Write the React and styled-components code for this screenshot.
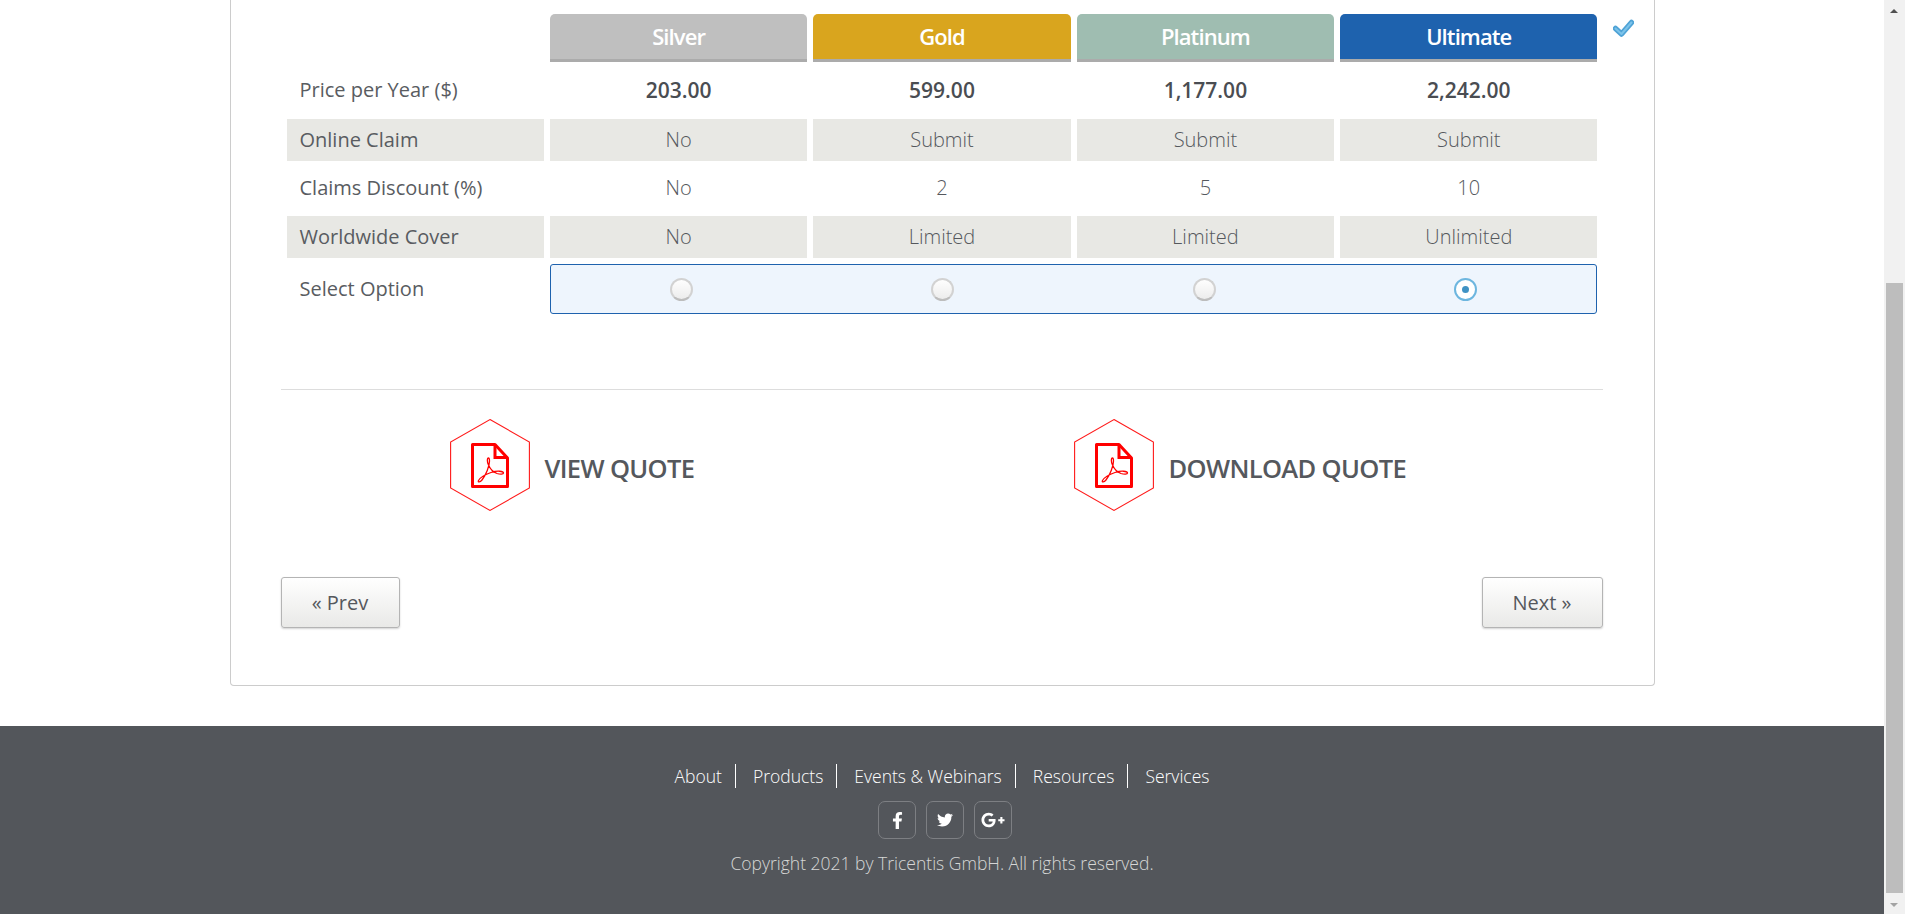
import React from "react";
import styled, { createGlobalStyle } from "styled-components";
import { FaFacebookF, FaTwitter, FaGooglePlusG } from "react-icons/fa";

const Global = createGlobalStyle`
  html, body { margin: 0; height: 100%; overflow: hidden; background: #fff; }
  body { font-family: "Open Sans", "Liberation Sans", sans-serif; color: #55585d; }
  #root { height: 100%; }
`;

const Page = styled.div`
  display: flex;
  height: 914px;
  overflow: hidden;
`;
const Main = styled.div`
  flex: 1;
  min-width: 0;
  display: flex;
  flex-direction: column;
`;
const Card = styled.section`
  width: 1425px;
  box-sizing: border-box;
  margin: 0 auto 40px;
  padding: 14px 51px 57px 50px;
  background: #fff;
  border: 1px solid #ccc;
  border-top: 0;
  border-radius: 0 0 4px 4px;
`;
const PlanGrid = styled.div`
  position: relative;
  display: grid;
  grid-template-columns: repeat(5, 1fr);
  grid-template-rows: 48px 45px 42px 43px 42px 50px;
  gap: 6px;
  margin: 0 5px 0 6px;
`;
const PlanHead = styled.div`
  display: flex;
  align-items: center;
  justify-content: center;
  box-sizing: border-box;
  padding-bottom: 1px;
  border-radius: 5px 5px 0 0;
  border-bottom: 3px solid #ababab;
  background: ${(p) => p.$bg};
  color: #fff;
  font-size: 22px;
  font-weight: 600;
  letter-spacing: -0.9px;
`;
const Label = styled.div`
  display: flex;
  align-items: center;
  padding: 0 0 2px 13px;
  font-size: 20px;
  color: #595c61;
  background: ${(p) => (p.$shaded ? "#e8e8e4" : "transparent")};
`;
const Value = styled.div`
  display: flex;
  align-items: center;
  justify-content: center;
  padding-bottom: 2px;
  font-size: 20px;
  font-weight: 300;
  color: #55585d;
  background: ${(p) => (p.$shaded ? "#e8e8e4" : "transparent")};
`;
const Price = styled(Value)`
  font-size: 21px;
  font-weight: 600;
  color: #4a4d52;
`;
const SelectBox = styled.div`
  grid-column: 2 / 6;
  display: grid;
  grid-template-columns: repeat(4, 1fr);
  align-items: center;
  justify-items: center;
  background: #eef5fd;
  border: 1px solid #1e62ae;
  border-radius: 3px;
`;
const Radio = styled.span`
  box-sizing: border-box;
  width: 23px;
  height: 23px;
  border-radius: 50%;
  display: flex;
  align-items: center;
  justify-content: center;
  background: ${(p) => (p.$on ? "#fff" : "linear-gradient(#fefefe, #ececec)")};
  border: ${(p) => (p.$on ? "2.5px solid #6db6df" : "2px solid #d2d2d2")};
  border-bottom-color: ${(p) => (p.$on ? "#6db6df" : "#bdbdbd")};
  &::after {
    content: "";
    display: ${(p) => (p.$on ? "block" : "none")};
    width: 7px;
    height: 7px;
    border-radius: 50%;
    background: #3f92c4;
  }
`;
const Check = styled.svg`
  position: absolute;
  left: 1326px;
  top: 5px;
  width: 21px;
  height: 18px;
`;
const Rule = styled.hr`
  height: 1px;
  border: 0;
  margin: 75px 0 0;
  background: #ddd;
`;
const Quotes = styled.div`
  display: grid;
  grid-template-columns: 624px 1fr;
  padding: 29px 0 0 169px;
`;
const QuoteLink = styled.a`
  display: flex;
  align-items: center;
  gap: 15px;
  font-size: 25.5px;
  font-weight: 600;
  color: #55585d;
  letter-spacing: -0.65px;
`;
const QuoteText = styled.span`
  padding-top: 5px;
`;
const HexIcon = styled.svg`
  width: 80px;
  height: 92px;
  flex: none;
`;
const Pager = styled.div`
  display: flex;
  justify-content: space-between;
  margin-top: 66px;
`;
const PagerButton = styled.button`
  width: ${(p) => p.$w}px;
  height: 51px;
  padding: 0;
  font-family: inherit;
  font-size: 20px;
  color: #55585d;
  background: linear-gradient(#fff, #e9e9e7);
  border: 1px solid #b4b4b4;
  border-radius: 3px;
  box-shadow: 0 1px 2px rgba(0, 0, 0, 0.18);
`;
const Footer = styled.footer`
  flex: 1;
  background: #53565b;
  padding-top: 38px;
  display: flex;
  flex-direction: column;
  align-items: center;
`;
const FootNav = styled.nav`
  display: flex;
  height: 24px;
`;
const FootLink = styled.a`
  display: flex;
  align-items: center;
  padding: 0 ${(p) => (p.$last ? 17 : 13)}px 0 17px;
  font-size: 17.5px;
  font-weight: 300;
  color: #fff;
  border-right: ${(p) => (p.$last ? "0" : "1px solid #fff")};
`;
const Socials = styled.div`
  display: flex;
  gap: 10px;
  margin: 13px 0 0 6px;
`;
const Social = styled.a`
  width: 38px;
  height: 38px;
  box-sizing: border-box;
  display: flex;
  align-items: center;
  justify-content: center;
  border: 1px solid #7d7f83;
  border-radius: 7px;
  color: #fff;
  font-size: ${(p) => p.$size}px;
`;
const Copy = styled.p`
  margin: 12px 0 0;
  font-size: 17.5px;
  font-weight: 300;
  color: #d6d6d6;
`;
const Scrollbar = styled.div`
  position: relative;
  width: 21px;
  flex: none;
  background: #f1f1f1;
`;
const Thumb = styled.div`
  position: absolute;
  left: 2px;
  right: 2px;
  top: 283px;
  height: 610px;
  background: #bdbdbd;
`;
const Arrow = styled.div`
  position: absolute;
  left: 6px;
  width: 0;
  height: 0;
  border-left: 4.5px solid transparent;
  border-right: 4.5px solid transparent;
  ${(p) =>
    p.$down
      ? "bottom: 7px; border-top: 4px solid #a3a3a3;"
      : "top: 9px; border-bottom: 4px solid #505050;"}
`;

const PdfHex = () => (
  <HexIcon viewBox="0 0 80 92">
    <polygon points="40,0.6 79.4,23 79.4,69 40,91.4 0.6,69 0.6,23" fill="none" stroke="#ff1a1a" strokeWidth="1.1" />
    <path d="M22.5 25.5H45L57.5 39V67.5H22.5Z" fill="none" stroke="#f00" strokeWidth="3" strokeLinejoin="round" />
    <path d="M45 25.5V38.5H57.5" fill="none" stroke="#f00" strokeWidth="3" />
    <path
      d="M38.5 39C37 39 37 43 38.5 46C40 49.5 43 53 47 54.5C50 55.5 53.5 55.5 53.5 54C53.5 52 47 51.5 41 53.5C35 55.5 30 59 28.5 61.5C27.5 63.5 30 63.5 32 61C36 56 39.5 47 39.5 42C39.5 40 39.5 39 38.5 39Z"
      fill="none"
      stroke="#f00"
      strokeWidth="1.3"
    />
  </HexIcon>
);

const plans = [
  { name: "Silver", bg: "#bfbfbf", price: "203.00", claim: "No", disc: "No", cover: "No" },
  { name: "Gold", bg: "#d9a51e", price: "599.00", claim: "Submit", disc: "2", cover: "Limited" },
  { name: "Platinum", bg: "#9fbdb1", price: "1,177.00", claim: "Submit", disc: "5", cover: "Limited" },
  { name: "Ultimate", bg: "#1e62ae", price: "2,242.00", claim: "Submit", disc: "10", cover: "Unlimited" },
];

export default function App() {
  return (
    <Page>
      <Global />
      <Main>
        <Card>
          <PlanGrid>
            <div />
            {plans.map((p) => <PlanHead key={p.name} $bg={p.bg}>{p.name}</PlanHead>)}
            <Label>Price per Year ($)</Label>
            {plans.map((p) => <Price key={p.name}>{p.price}</Price>)}
            <Label $shaded>Online Claim</Label>
            {plans.map((p) => <Value key={p.name} $shaded>{p.claim}</Value>)}
            <Label>Claims Discount (%)</Label>
            {plans.map((p) => <Value key={p.name}>{p.disc}</Value>)}
            <Label $shaded>Worldwide Cover</Label>
            {plans.map((p) => <Value key={p.name} $shaded>{p.cover}</Value>)}
            <Label>Select Option</Label>
            <SelectBox>
              {plans.map((p, i) => <Radio key={p.name} $on={i === 3} />)}
            </SelectBox>
            <Check viewBox="1.5 0 21 18">
              <path d="M4 9.5L10 15L20 3.5" fill="none" stroke="#4fa3d6" strokeWidth="5.5" strokeLinecap="round" strokeLinejoin="round" />
              <path d="M4 9.5L10 15L20 3.5" fill="none" stroke="#7cc3ea" strokeWidth="2" strokeLinecap="round" strokeLinejoin="round" />
            </Check>
          </PlanGrid>
          <Rule />
          <Quotes>
            <QuoteLink><PdfHex /><QuoteText>VIEW QUOTE</QuoteText></QuoteLink>
            <QuoteLink><PdfHex /><QuoteText>DOWNLOAD QUOTE</QuoteText></QuoteLink>
          </Quotes>
          <Pager>
            <PagerButton $w={119}>« Prev</PagerButton>
            <PagerButton $w={121}>Next »</PagerButton>
          </Pager>
        </Card>
        <Footer>
          <FootNav>
            <FootLink>About</FootLink>
            <FootLink>Products</FootLink>
            <FootLink>Events &amp; Webinars</FootLink>
            <FootLink>Resources</FootLink>
            <FootLink $last>Services</FootLink>
          </FootNav>
          <Socials>
            <Social $size={17}><FaFacebookF /></Social>
            <Social $size={16}><FaTwitter /></Social>
            <Social $size={24}><FaGooglePlusG /></Social>
          </Socials>
          <Copy>Copyright 2021 by Tricentis GmbH. All rights reserved.</Copy>
        </Footer>
      </Main>
      <Scrollbar>
        <Arrow />
        <Thumb />
        <Arrow $down />
      </Scrollbar>
    </Page>
  );
}
